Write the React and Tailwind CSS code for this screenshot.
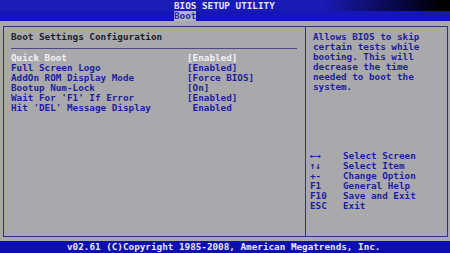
import React from 'react';

const items = [
  { label: 'Quick Boot', value: '[Enabled]', active: true },
  { label: 'Full Screen Logo', value: '[Enabled]' },
  { label: 'AddOn ROM Display Mode', value: '[Force BIOS]' },
  { label: 'Bootup Num-Lock', value: '[On]' },
  { label: "Wait For 'F1' If Error", value: '[Enabled]' },
  { label: "Hit 'DEL' Message Display", value: ' Enabled' },
];

const help = [
  'Allows BIOS to skip',
  'certain tests while',
  'booting. This will',
  'decrease the time',
  'needed to boot the',
  'system.',
];

const keys = [
  ['←→', 'Select Screen'],
  ['↑↓', 'Select Item'],
  ['+-', 'Change Option'],
  ['F1', 'General Help'],
  ['F10', 'Save and Exit'],
  ['ESC', 'Exit'],
];

export default function App() {
  return (
    <div className="w-[450px] h-[253px] flex flex-col bg-[#a9a9ab] font-['DejaVu_Sans_Mono',monospace] font-bold text-[9.3px] leading-[10px] whitespace-pre overflow-hidden">
      <div className="h-[11px] pl-[174px] pt-[1px] text-[#e4e4f0] bg-[linear-gradient(to_right,#1c1cb8_0%,#1a1ab4_72%,#06063a_90%,#000_98%)]">
        BIOS SETUP UTILITY
      </div>
      <div className="h-[10px] pl-[174px] bg-[#1616b8]">
        <span className="inline-block h-[10px] w-[22px] bg-[#b4b4bc] text-[#2828b0]">Boot</span>
      </div>

      <div className="flex-1 pt-[5px] pb-[4px] pl-[3px] pr-[2px]">
        <div className="h-full flex border border-[#30307c]">
          <div className="w-[302px] border-r border-[#30307c] pl-[7px] pr-[8px] pt-[5px]">
            <div className="text-[#1c1c2c]">Boot Settings Configuration</div>
            <div className="mt-[6px] mb-[4px] h-px bg-[#4a4a84]" />
            {items.map((it) => (
              <div key={it.label} className={`flex ${it.active ? 'text-[#f2f2f6]' : 'text-[#1e1ea0]'}`}>
                <span className="w-[176px]">{it.label}</span>
                <span>{it.value}</span>
              </div>
            ))}
          </div>
          <div className="flex-1 flex flex-col pl-[7px] pt-[5px] pb-[25px] text-[#1e1ea0]">
            <div>
              {help.map((l) => (
                <div key={l}>{l}</div>
              ))}
            </div>
            <div className="mt-auto -ml-[3px]">
              {keys.map(([k, d]) => (
                <div key={k} className="flex">
                  <span className="w-[33px]">{k}</span>
                  <span>{d}</span>
                </div>
              ))}
            </div>
          </div>
        </div>
      </div>

      <div className="h-[12px] pl-[67px] pt-[1px] bg-[#0e0eb0] text-[#e8e8f0]">
        v02.61 (C)Copyright 1985-2008, American Megatrends, Inc.
      </div>
    </div>
  );
}
